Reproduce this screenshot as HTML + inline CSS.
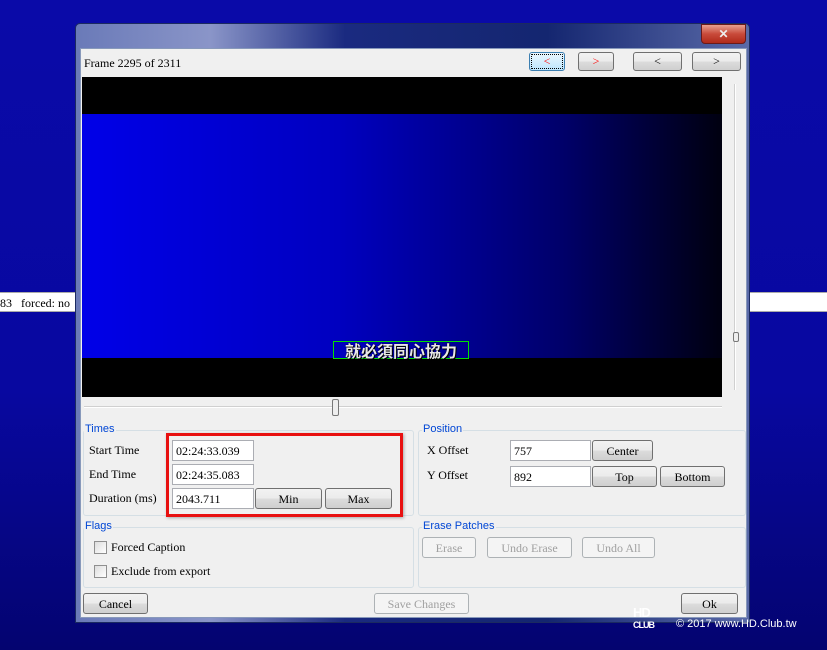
<!DOCTYPE html>
<html><head><meta charset="utf-8"><style>
*{box-sizing:border-box;margin:0;padding:0}
body{width:827px;height:650px;overflow:hidden;position:relative;background:linear-gradient(180deg,#0a0aa8 0%,#0808a0 60%,#040470 100%);font-family:"Liberation Serif","Noto Serif CJK SC",serif;font-size:12px;color:#000}
.a{position:absolute}
.strip{left:0;top:292px;width:827px;height:20px;background:#fff;border-top:1px solid #aaa;border-bottom:1px solid #aaa}
.win{left:75px;top:23px;width:675px;height:600px;border:1px solid #1b2a60;background:linear-gradient(90deg,#6a7ab8 0%,#8a95c8 20%,#1a2a80 40%,#142670 70%,#5a6aa8 100%);border-radius:5px 5px 0 0}
.client{left:80px;top:48px;width:667px;height:570px;background:#f0f0f0;border:1px solid #8899bb}
.btn{position:absolute;border:1px solid #707070;border-radius:3px;background:linear-gradient(#f2f2f2,#ebebeb 50%,#dcdcdc 51%,#cfcfcf);text-align:center;font-size:12px;line-height:20px}
.dis{color:#a0a0a0;border-color:#adb2b5;background:#f4f4f4}
.tb{position:absolute;background:#fff;border:1px solid #abadb3;font-size:12px;line-height:20px;padding-left:3px;height:21px}
.grp{position:absolute;border:1px solid #d5dfe5;border-radius:3px}
.gl{position:absolute;color:#0046d5;font-family:"Liberation Sans",sans-serif;font-size:11px;background:#f0f0f0;padding:0 1px}
.lbl{position:absolute;font-size:12px}
.cb{position:absolute;width:13px;height:13px;border:1px solid #8f8f8f;background:linear-gradient(135deg,#ddd,#fff)}
</style></head><body>
<div class="a strip"></div>
<div class="a" style="left:0;top:296px;font-size:12px">83 &nbsp; forced: no</div>
<div class="a win"></div>
<div class="a" style="left:701px;top:24px;width:45px;height:20px;border:1px solid #6a1a1a;border-radius:0 0 4px 4px;background:linear-gradient(#e8a090,#c84a3a 50%,#b02a1a);color:#eee;font:bold 12px 'Liberation Sans',sans-serif;text-align:center;line-height:18px">✕</div>
<div class="a client"></div>
<div class="lbl" style="left:84px;top:56px">Frame 2295 of 2311</div>
<div class="btn" style="left:529px;top:52px;width:36px;height:19px;border-color:#3c7fb1;background:linear-gradient(#eaf6fd,#bee6fd);color:red;line-height:17px;outline:1px dotted #000;outline-offset:-3px">&lt;</div>
<div class="btn" style="left:578px;top:52px;width:36px;height:19px;color:red;line-height:17px">&gt;</div>
<div class="btn" style="left:633px;top:52px;width:49px;height:19px;line-height:17px">&lt;</div>
<div class="btn" style="left:692px;top:52px;width:49px;height:19px;line-height:17px">&gt;</div>
<div class="a" style="left:82px;top:77px;width:640px;height:320px;background:#000"></div>
<div class="a" style="left:82px;top:114px;width:640px;height:244px;background:linear-gradient(90deg,#0000e8 0%,#0000c0 40%,#00006a 75%,#000010 100%)"></div>
<div class="a" style="left:333px;top:341px;width:136px;height:18px;border:1px solid #00e000;color:#e8e8e8;font:bold 16px 'Noto Sans CJK TC',sans-serif;line-height:16px;text-align:center;text-shadow:0 0 1px #000,1px 1px 0 #000">就必須同心協力</div>
<div class="a" style="left:734px;top:84px;width:2px;height:306px;background:#d0d0d0;border-right:1px solid #fff"></div>
<div class="a" style="left:733px;top:332px;width:6px;height:10px;border:1px solid #777;background:#eee;border-radius:2px"></div>
<div class="a" style="left:84px;top:406px;width:638px;height:2px;background:#d0d0d0;border-bottom:1px solid #fff"></div>
<div class="a" style="left:332px;top:399px;width:7px;height:17px;border:1px solid #777;background:#eee;border-radius:2px"></div>
<div class="grp" style="left:83px;top:430px;width:331px;height:86px"></div><div class="gl" style="left:84px;top:423px">Times</div>
<div class="grp" style="left:418px;top:430px;width:328px;height:86px"></div><div class="gl" style="left:422px;top:423px">Position</div>
<div class="grp" style="left:83px;top:527px;width:331px;height:61px"></div><div class="gl" style="left:84px;top:520px">Flags</div>
<div class="grp" style="left:418px;top:527px;width:328px;height:61px"></div><div class="gl" style="left:422px;top:520px">Erase Patches</div>
<div class="lbl" style="left:89px;top:443px">Start Time</div>
<div class="lbl" style="left:89px;top:467px">End Time</div>
<div class="lbl" style="left:89px;top:491px">Duration (ms)</div>
<div class="tb" style="left:172px;top:440px;width:82px">02:24:33.039</div>
<div class="tb" style="left:172px;top:464px;width:82px">02:24:35.083</div>
<div class="tb" style="left:172px;top:488px;width:82px">2043.711</div>
<div class="btn" style="left:255px;top:488px;width:67px;height:21px">Min</div>
<div class="btn" style="left:325px;top:488px;width:67px;height:21px">Max</div>
<div class="a" style="left:166px;top:433px;width:237px;height:84px;border:3px solid #e81010;box-shadow:1px 1px 3px rgba(0,0,0,.3)"></div>
<div class="lbl" style="left:427px;top:443px">X Offset</div>
<div class="lbl" style="left:427px;top:468px">Y Offset</div>
<div class="tb" style="left:510px;top:440px;width:81px">757</div>
<div class="tb" style="left:510px;top:466px;width:81px">892</div>
<div class="btn" style="left:592px;top:440px;width:61px;height:21px">Center</div>
<div class="btn" style="left:592px;top:466px;width:65px;height:21px">Top</div>
<div class="btn" style="left:660px;top:466px;width:65px;height:21px">Bottom</div>
<div class="cb" style="left:94px;top:541px"></div><div class="lbl" style="left:111px;top:540px">Forced Caption</div>
<div class="cb" style="left:94px;top:565px"></div><div class="lbl" style="left:111px;top:564px">Exclude from export</div>
<div class="btn dis" style="left:422px;top:537px;width:54px;height:21px">Erase</div>
<div class="btn dis" style="left:487px;top:537px;width:85px;height:21px">Undo Erase</div>
<div class="btn dis" style="left:582px;top:537px;width:73px;height:21px">Undo All</div>
<div class="btn" style="left:83px;top:593px;width:65px;height:21px">Cancel</div>
<div class="btn dis" style="left:374px;top:593px;width:95px;height:21px">Save Changes</div>
<div class="btn" style="left:681px;top:593px;width:57px;height:21px">Ok</div>
<div class="a" style="left:633px;top:607px;color:#fff;font:bold 13px 'Liberation Sans',sans-serif;letter-spacing:-1px;line-height:11px">HD<br><span style="font-size:9px">CLUB</span></div>
<div class="a" style="left:676px;top:618px;color:#fff;font:11px 'Liberation Sans',sans-serif">© 2017 www.HD.Club.tw</div>
</body></html>
